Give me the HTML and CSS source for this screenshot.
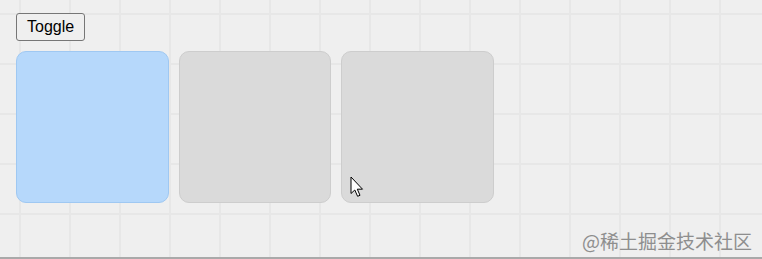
FILE: index.html
```html
<!DOCTYPE html>
<html lang="zh-CN">
<head>
<meta charset="utf-8">
<title>Toggle</title>
<link rel="stylesheet" href="styles.css">
</head>
<body>
<main class="demo">
  <button class="toggle-btn" type="button">Toggle</button>
  <div class="cards">
    <div class="card card-active"></div>
    <div class="card"></div>
    <div class="card"></div>
  </div>
</main>
<svg class="cursor" width="14" height="22" viewBox="0 0 14 22" aria-hidden="true">
  <path d="M1 1 L1 17.5 L4.8 14 L7.6 20.3 L10 19.3 L7.3 13.2 L12.5 13.2 Z" fill="#fff" stroke="#000" stroke-width="1" stroke-linejoin="round"/>
</svg>
<div class="watermark">@稀土掘金技术社区</div>
</body>
</html>
```
FILE: styles.css
```css
html, body {
  margin: 0;
  padding: 0;
}
body {
  position: relative;
  box-sizing: border-box;
  min-height: 100vh;
  background-color: #efefef;
  background-image:
    linear-gradient(to right, #e7e7e7 2px, transparent 2px),
    linear-gradient(to bottom, #e7e7e7 2px, transparent 2px);
  background-size: 50px 50px, 50px 50px;
  background-position: 19px 0, 0 13px;
  border-bottom: 2px solid #a9a9a9;
  font-family: "Liberation Sans", Arial, sans-serif;
  overflow: hidden;
}
.demo {
  display: flex;
  flex-direction: column;
  align-items: flex-start;
  gap: 10px;
  padding: 13px 16px 0;
}
.toggle-btn {
  font-family: "Liberation Sans", Arial, sans-serif;
  font-size: 16px;
  line-height: 18px;
  height: 28px;
  padding: 4px 10px;
  color: #000;
  background: #efefef;
  border: 1px solid #767676;
  border-radius: 3px;
}
.cards {
  display: flex;
  gap: 10px;
}
.card {
  box-sizing: border-box;
  width: 152.5px;
  height: 152px;
  background: #dadada;
  border: 1px solid #cdcdcd;
  border-radius: 10px;
}
.card-active {
  background: #b6d8fb;
  border-color: #9fc8f2;
}
.cursor {
  position: absolute;
  left: 350px;
  top: 176px;
}
.watermark {
  position: absolute;
  right: 10px;
  top: 230px;
  font-family: "Noto Sans CJK SC", sans-serif;
  font-size: 19px;
  line-height: 21px;
  color: #8e8e8e;
}
```
